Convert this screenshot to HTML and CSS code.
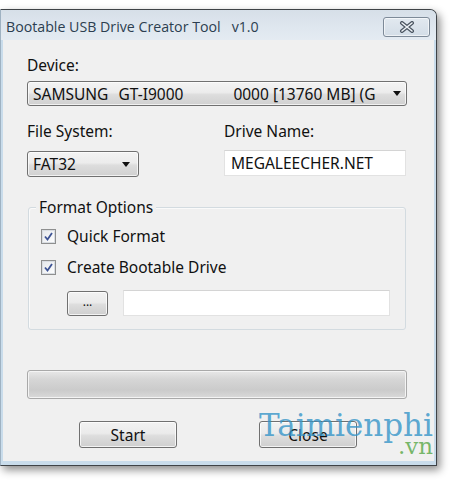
FILE: index.html
```html
<!DOCTYPE html>
<html>
<head>
<meta charset="utf-8">
<link rel="stylesheet" href="styles.css">
</head>
<body>
<div class="window">
  <div class="titlebar">
    <span class="title">Bootable USB Drive Creator Tool&nbsp;&nbsp; v1.0</span>
    <span class="close-x">
      <svg width="20" height="12" viewBox="0 0 20 12"><path d="M5 2 L15 10 M15 2 L5 10" stroke="#4b5561" stroke-width="4" stroke-linecap="round" fill="none"/><path d="M5 2 L15 10 M15 2 L5 10" stroke="#eef2f6" stroke-width="1.6" stroke-linecap="round" fill="none"/></svg>
    </span>
  </div>
  <div class="client">
    <div class="label">Device:</div>
    <div class="combo combo-device">
      <span class="ct t1">SAMSUNG</span><span class="ct t2">GT-I9000</span><span class="ct t3">0000 [13760 MB] (G</span>
      <span class="arrow"></span>
    </div>
    <div class="row labels">
      <div class="label">File System:</div>
      <div class="label">Drive Name:</div>
    </div>
    <div class="row fields">
      <div class="combo combo-fs"><span class="ct">FAT32</span><span class="arrow"></span></div>
      <div class="textbox drive">MEGALEECHER.NET</div>
    </div>
    <div class="group">
      <div class="group-title">Format Options</div>
      <div class="check-row first"><span class="checkbox"><svg width="9" height="9" viewBox="0 0 9 9"><path d="M1 4.5 L3.5 7.5 L8 1" stroke="#3d5394" stroke-width="1.8" fill="none"/></svg></span><span>Quick Format</span></div>
      <div class="check-row"><span class="checkbox"><svg width="9" height="9" viewBox="0 0 9 9"><path d="M1 4.5 L3.5 7.5 L8 1" stroke="#3d5394" stroke-width="1.8" fill="none"/></svg></span><span>Create Bootable Drive</span></div>
      <div class="browse-row">
        <div class="btn small">...</div>
        <div class="textbox path"></div>
      </div>
    </div>
    <div class="progress"></div>
    <div class="buttons">
      <div class="btn big">Start</div>
      <div class="btn big">Close</div>
    </div>
  </div>
  <div class="watermark"><span class="wm-main">Taimienphi</span><span class="wm-vn">.vn</span></div>
</div>
</body>
</html>
```
FILE: styles.css
```css
html, body {
  margin: 0;
  padding: 0;
  background: #ffffff;
  width: 450px;
  height: 484px;
  overflow: hidden;
}
body {
  font-family: "Noto Sans", "Open Sans", sans-serif;
  font-size: 15.5px;
  color: #111;
}
.window {
  position: relative;
  margin-top: 9px;
  width: 437px;
  box-sizing: border-box;
  border: 1px solid #3f4347;
  border-left: 1px solid #9fb2c2;
  border-radius: 0 7px 0 0;
  background: #c9dceb;
  box-shadow: 3px 4px 8px rgba(0, 0, 0, 0.45);
}
.titlebar {
  height: 30px;
  display: flex;
  align-items: center;
  justify-content: space-between;
  padding: 0 4px 0 5px;
  background: linear-gradient(#d6dfe8, #dfe7ef 60%, #e4ebf2);
  border-radius: 0 6px 0 0;
}
.title {
  font-family: "Open Sans", "Noto Sans", sans-serif;
  font-size: 14.2px;
  color: #2c3e50;
  margin-top: 2px;
}
.close-x {
  width: 45px;
  height: 18px;
  margin-top: 4px;
  margin-right: 2px;
  border: 1px solid #7d8a98;
  border-radius: 3px;
  background: linear-gradient(#e2e9f0, #d3dde7);
  display: flex;
  align-items: center;
  justify-content: center;
  box-shadow: inset 0 0 0 1px rgba(255,255,255,0.6);
}
.client {
  margin: 0 2px 4px 2px;
  background: #f0f0f0;
  padding: 16px 0 14px 24px;
  height: 421px;
  box-sizing: border-box;
}
.label {
  height: 18px;
  line-height: 18px;
}
.combo {
  position: relative;
  box-sizing: border-box;
  border: 1px solid #707070;
  border-radius: 3px;
  background: linear-gradient(#f3f3f3, #ececec 45%, #dddddd 55%, #d0d0d0);
  display: flex;
  align-items: center;
  white-space: nowrap;
  overflow: hidden;
  box-shadow: inset 0 0 0 1px rgba(255,255,255,0.7);
}
.combo-device {
  margin-top: 7px;
  width: 380px;
  height: 25px;
}
.ct { line-height: 22px; }
.t1 { margin-left: 5px; }
.t2 { margin-left: 10px; }
.t3 { margin-left: 50px; }
.arrow {
  position: absolute;
  right: 5px;
  top: 9px;
  width: 0;
  height: 0;
  border-left: 4px solid transparent;
  border-right: 4px solid transparent;
  border-top: 5px solid #111;
}
.row {
  display: flex;
}
.labels {
  margin-top: 16px;
}
.labels .label:first-child { width: 197px; }
.fields {
  margin-top: 10px;
  align-items: flex-start;
}
.combo-fs {
  width: 112px;
  height: 26px;
  margin-top: 1px;
}
.combo-fs .ct { margin-left: 5px; }
.combo-fs .arrow { right: 8px; top: 10px; }
.textbox {
  box-sizing: border-box;
  background: #fff;
  border: 1px solid #e2e2e2;
  border-top-color: #d4d4d4;
}
.drive {
  margin-left: 85px;
  width: 182px;
  height: 26px;
  line-height: 24px;
  padding-left: 6px;
}
.group {
  margin-top: 30px;
  margin-left: 1px;
  width: 378px;
  height: 123px;
  box-sizing: border-box;
  border: 1px solid #d3dbe0;
  border-radius: 3px;
  box-shadow: inset 1px 1px 0 #fafafa;
}
.group-title {
  margin-top: -10px;
  margin-left: 7px;
  padding: 0 3px;
  width: fit-content;
  background: #f0f0f0;
  height: 18px;
  line-height: 18px;
}
.check-row {
  display: flex;
  align-items: center;
  height: 16px;
  margin-top: 15px;
  margin-left: 12px;
}
.check-row.first { margin-top: 12px; }
.checkbox {
  width: 13px;
  height: 13px;
  border: 1px solid #8e8f8f;
  background: linear-gradient(135deg, #e4e7eb, #ffffff);
  box-shadow: inset 0 0 0 1px #d9dde2;
  display: flex;
  align-items: center;
  justify-content: center;
  margin-right: 11px;
}
.browse-row {
  display: flex;
  align-items: center;
  margin-top: 15px;
  margin-left: 38px;
}
.btn {
  box-sizing: border-box;
  border: 1px solid #707070;
  border-radius: 3px;
  background: linear-gradient(#f2f2f2, #ebebeb 45%, #dddddd 55%, #cfcfcf);
  box-shadow: inset 0 0 0 1px rgba(255,255,255,0.75);
  display: flex;
  align-items: center;
  justify-content: center;
}
.small {
  width: 41px;
  height: 25px;
  font-size: 12px;
  padding-bottom: 3px;
}
.path {
  margin-left: 15px;
  width: 267px;
  height: 26px;
}
.progress {
  margin-top: 40px;
  width: 380px;
  height: 29px;
  box-sizing: border-box;
  border: 1px solid #a9a9a9;
  border-radius: 3px;
  background: linear-gradient(#e8e8e8, #d6d6d6 30%, #cbcbcb 70%, #dadada);
  box-shadow: inset 0 0 0 1px #f4f4f4;
}
.buttons {
  display: flex;
  margin-top: 22px;
  margin-left: 52px;
  gap: 82px;
}
.big {
  width: 98px;
  height: 27px;
}
.watermark {
  position: absolute;
  left: 257px;
  top: 399px;
  width: 175px;
  display: flex;
  flex-direction: column;
  align-items: flex-end;
  pointer-events: none;
}
.wm-main {
  font-family: "DejaVu Serif", serif;
  font-size: 31px;
  line-height: 33px;
  color: rgba(52, 148, 200, 0.8);
  white-space: nowrap;
}
.wm-vn {
  font-family: "DejaVu Serif", serif;
  font-size: 23px;
  line-height: 16px;
  margin-top: -4px;
  color: rgba(96, 172, 80, 0.85);
}
```
